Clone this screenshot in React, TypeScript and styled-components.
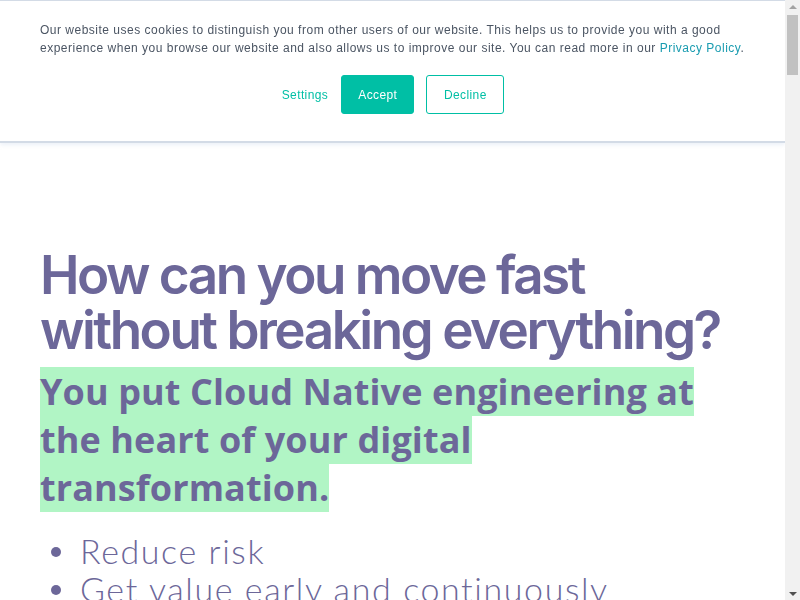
import styled, { createGlobalStyle } from 'styled-components';

const GlobalStyle = createGlobalStyle`
  html, body {
    margin: 0;
    padding: 0;
    background: #ffffff;
  }
  body {
    font-family: 'Liberation Sans', Arial, sans-serif;
  }
`;

const Page = styled.div`
  margin-right: 15px;
`;

const CookieBar = styled.div`
  position: fixed;
  top: 0;
  left: 0;
  right: 15px;
  z-index: 500;
  background: #ffffff;
  border-top: 1px solid #d3dbe6;
  border-bottom: 2px solid #d3dbe6;
  box-shadow: 0 2px 4px rgba(200, 215, 235, 0.35);
  padding: 20px 40px 26px 40px;
  height: 94px;
`;

const CookieText = styled.p`
  margin: 0;
  font-size: 12px;
  line-height: 18px;
  letter-spacing: 0.5px;
  color: #4b5563;
`;

const CookieLink = styled.a`
  color: #1a9cb0;
  text-decoration: none;
`;

const CookieActions = styled.div`
  display: flex;
  justify-content: center;
  align-items: center;
  gap: 12px;
  margin-top: 18px;
`;

const CookieButton = styled.button<{ $variant: 'text' | 'solid' | 'outline' }>`
  font-family: 'Liberation Sans', Arial, sans-serif;
  font-size: 12px;
  letter-spacing: 0.4px;
  height: 39px;
  border-radius: 3px;
  cursor: pointer;
  padding: 0 ${(p) => (p.$variant === 'text' ? '0' : '16px')};
  border: 1px solid ${(p) => (p.$variant === 'text' ? 'transparent' : '#00bfa5')};
  background: ${(p) => (p.$variant === 'solid' ? '#00bfa5' : '#ffffff')};
  color: ${(p) => (p.$variant === 'solid' ? '#ffffff' : '#00bfa5')};
  min-width: ${(p) => (p.$variant === 'outline' ? '78px' : p.$variant === 'solid' ? '73px' : 'auto')};
`;

/* window scrollbar, as the browser drew it in the shot */
const Scrollbar = styled.div`
  position: fixed;
  top: 0;
  right: 0;
  bottom: 0;
  width: 15px;
  z-index: 600;
  background: #f1f1f1;
  display: flex;
  flex-direction: column;
  align-items: center;
`;

const ScrollArrow = styled.div<{ $down?: boolean }>`
  height: 15px;
  flex: none;
  display: flex;
  align-items: center;
  justify-content: center;
  ${(p) => p.$down && 'margin-top: auto;'}

  &::after {
    content: '';
    width: 0;
    height: 0;
    border-left: 4px solid transparent;
    border-right: 4px solid transparent;
    ${(p) =>
      p.$down
        ? 'border-top: 4px solid #505050; margin-top: 2px;'
        : 'border-bottom: 4px solid #a3a3a3; margin-bottom: 2px;'}
  }
`;

const ScrollThumb = styled.div`
  width: 11px;
  height: 60px;
  background: #c1c1c1;
`;

const Main = styled.main`
  padding: 248px 40px 200px 40px;
  color: #6c6799;
`;

const Heading = styled.h1`
  margin: 0;
  font-family: Inter, 'Noto Sans', sans-serif;
  font-weight: 600;
  font-size: 53px;
  line-height: 55px;
  letter-spacing: -2.5px;
  max-width: 700px;
`;

const Subheading = styled.h2`
  margin: 10px 0 0 0;
  font-family: 'Open Sans', sans-serif;
  font-weight: 700;
  font-size: 36px;
  line-height: 48px;
  letter-spacing: 0.1px;
  max-width: 680px;
`;

const Highlight = styled.span`
  background: #b1f5c5;
`;

const Points = styled.ul`
  margin: 20px 0 0 0;
  padding-left: 40px;
  list-style: none;
  font-family: Lato, 'Noto Sans', sans-serif;
  font-weight: 300;
  font-size: 34px;
  line-height: 38px;
  letter-spacing: 1.6px;
`;

const Point = styled.li`
  position: relative;

  &::before {
    content: '';
    position: absolute;
    left: -29px;
    top: 15px;
    width: 10px;
    height: 10px;
    border-radius: 50%;
    background: currentColor;
  }
`;

export default function App() {
  return (
    <Page>
      <GlobalStyle />
      <CookieBar>
        <CookieText>
          Our website uses cookies to distinguish you from other users of our website. This helps us to provide you with a good
          experience when you browse our website and also allows us to improve our site. You can read more in our{' '}
          <CookieLink href="#">Privacy Policy</CookieLink>.
        </CookieText>
        <CookieActions>
          <CookieButton $variant="text">Settings</CookieButton>
          <CookieButton $variant="solid">Accept</CookieButton>
          <CookieButton $variant="outline">Decline</CookieButton>
        </CookieActions>
      </CookieBar>
      <Scrollbar>
        <ScrollArrow />
        <ScrollThumb />
        <ScrollArrow $down />
      </Scrollbar>
      <Main>
        <Heading>How can you move fast without breaking everything?</Heading>
        <Subheading>
          <Highlight>You put Cloud Native engineering at the heart of your digital transformation.</Highlight>
        </Subheading>
        <Points>
          <Point>Reduce risk</Point>
          <Point>Get value early and continuously</Point>
          <Point>Scale with confidence</Point>
          <Point>Build a culture of learning</Point>
        </Points>
      </Main>
    </Page>
  );
}
